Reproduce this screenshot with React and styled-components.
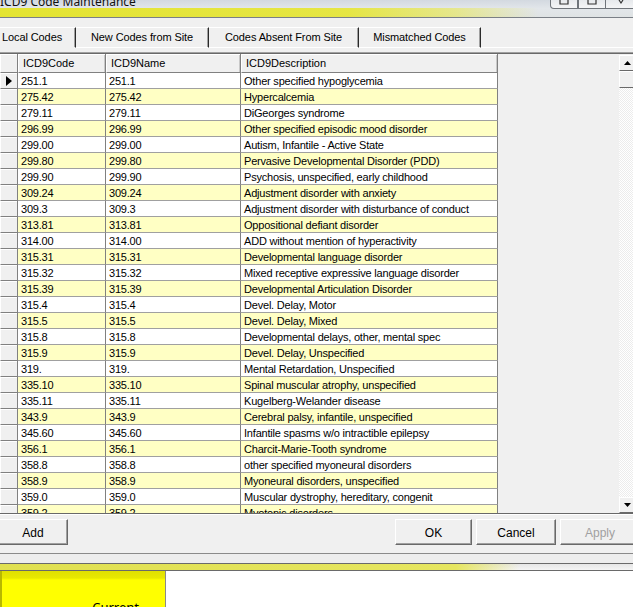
import styled, { createGlobalStyle } from "styled-components";

const GlobalStyle = createGlobalStyle`
  html, body {
    margin: 0;
    padding: 0;
    background: #ffffff;
    overflow: hidden;
  }
  body {
    font-family: "Liberation Sans", Arial, sans-serif;
  }
`;

const ROWS = [
  ["251.1", "251.1", "Other specified hypoglycemia"],
  ["275.42", "275.42", "Hypercalcemia"],
  ["279.11", "279.11", "DiGeorges syndrome"],
  ["296.99", "296.99", "Other specified episodic mood disorder"],
  ["299.00", "299.00", "Autism, Infantile - Active State"],
  ["299.80", "299.80", "Pervasive Developmental Disorder (PDD)"],
  ["299.90", "299.90", "Psychosis, unspecified, early childhood"],
  ["309.24", "309.24", "Adjustment disorder with anxiety"],
  ["309.3", "309.3", "Adjustment disorder with disturbance of conduct"],
  ["313.81", "313.81", "Oppositional defiant disorder"],
  ["314.00", "314.00", "ADD without mention of hyperactivity"],
  ["315.31", "315.31", "Developmental language disorder"],
  ["315.32", "315.32", "Mixed receptive expressive language disorder"],
  ["315.39", "315.39", "Developmental Articulation Disorder"],
  ["315.4", "315.4", "Devel. Delay, Motor"],
  ["315.5", "315.5", "Devel. Delay, Mixed"],
  ["315.8", "315.8", "Developmental delays, other, mental spec"],
  ["315.9", "315.9", "Devel. Delay, Unspecified"],
  ["319.", "319.", "Mental Retardation, Unspecified"],
  ["335.10", "335.10", "Spinal muscular atrophy, unspecified"],
  ["335.11", "335.11", "Kugelberg-Welander disease"],
  ["343.9", "343.9", "Cerebral palsy, infantile, unspecified"],
  ["345.60", "345.60", "Infantile spasms w/o intractible epilepsy"],
  ["356.1", "356.1", "Charcit-Marie-Tooth syndrome"],
  ["358.8", "358.8", "other specified myoneural disorders"],
  ["358.9", "358.9", "Myoneural disorders, unspecified"],
  ["359.0", "359.0", "Muscular dystrophy, hereditary, congenit"],
  ["359.2", "359.2", "Myotonic disorders"],
];

const COLS = [
  { key: "ICD9Code", w: 88 },
  { key: "ICD9Name", w: 135 },
  { key: "ICD9Description", w: 257 },
];

const TABS = [
  { label: "Local Codes", w: 76, active: true },
  { label: "New Codes from Site", w: 133 },
  { label: "Codes Absent From Site", w: 150 },
  { label: "Mismatched Codes", w: 122 },
];

export default function App() {
  return (
    <>
      <GlobalStyle />
      <Window>
        <TitleBar>
          <Title>ICD9 Code Maintenance</Title>
          <Caption>
            <CaptionButton>
              <svg width="12" height="7" viewBox="0 0 12 7">
                <path d="M2 0V4H10V0" fill="none" stroke="#333" strokeWidth="1.2" />
              </svg>
            </CaptionButton>
            <CaptionButton>
              <svg width="12" height="7" viewBox="0 0 12 7">
                <path d="M2 0V4H10V0" fill="none" stroke="#333" strokeWidth="1.2" />
              </svg>
            </CaptionButton>
            <CaptionButton last>
              <svg width="12" height="7" viewBox="0 0 12 7">
                <path d="M4 0L6 3L8 0" fill="none" stroke="#333" strokeWidth="1.2" />
              </svg>
            </CaptionButton>
          </Caption>
        </TitleBar>

        <TabArea>
          <TabRow>
            {TABS.map((t) => (
              <Tab key={t.label} $w={t.w} $active={t.active}>
                {t.label}
              </Tab>
            ))}
            <TabFill />
          </TabRow>
        </TabArea>

        <GridFrame>
          <Table>
            <HeaderRow>
              <Indicator header />
              {COLS.map((c) => (
                <HeaderCell key={c.key} $w={c.w}>
                  {c.key}
                </HeaderCell>
              ))}
            </HeaderRow>
            <Body>
              {ROWS.map((r, i) => (
                <Row key={r[0] + i} $alt={i % 2 === 1}>
                  <Indicator>
                    {i === 0 && (
                      <svg width="6" height="10" viewBox="0 0 6 10">
                        <path d="M0 0L6 5L0 10Z" fill="#000" />
                      </svg>
                    )}
                  </Indicator>
                  {r.map((v, j) => (
                    <Cell key={j} $w={COLS[j].w}>
                      {v}
                    </Cell>
                  ))}
                </Row>
              ))}
            </Body>
          </Table>
          <Empty />
          <ScrollBar>
            <ArrowButton>
              <svg width="7" height="4" viewBox="0 0 7 4">
                <path d="M0 4L3.5 0L7 4Z" fill="#000" />
              </svg>
            </ArrowButton>
            <Thumb />
            <Track />
            <ArrowButton>
              <svg width="7" height="4" viewBox="0 0 7 4">
                <path d="M0 0L3.5 4L7 0Z" fill="#000" />
              </svg>
            </ArrowButton>
          </ScrollBar>
        </GridFrame>

        <ButtonBar>
          <Button $w={70}>Add</Button>
          <Spacer />
          <Button $w={77}>OK</Button>
          <Button $w={80}>Cancel</Button>
          <Button $w={80} disabled>
            Apply
          </Button>
        </ButtonBar>

        <Divider />
        <Strip />
        <NextWindow>
          <YellowPanel>
            <PanelText>Current</PanelText>
          </YellowPanel>
          <WhitePanel />
        </NextWindow>
      </Window>
    </>
  );
}

const Window = styled.div`
  width: 633px;
  height: 607px;
  overflow: hidden;
  display: flex;
  flex-direction: column;
  background: #f0f0f0;
  font-family: "Liberation Sans", Arial, sans-serif;
  font-size: 11px;
  color: #000;
`;

const TitleBar = styled.div`
  height: 17px;
  flex: none;
  display: flex;
  align-items: flex-start;
  justify-content: space-between;
  border-bottom: 1px solid #7a7f86;
  background:
    linear-gradient(
        to right,
        rgba(228, 228, 40, 0.95) 0%,
        rgba(230, 230, 50, 0.9) 55%,
        rgba(232, 232, 80, 0.6) 72%,
        rgba(232, 232, 80, 0) 85%
      )
      0 8px / 100% 9px no-repeat,
    linear-gradient(to bottom, #d3d9e0 0%, #e2e6ea 50%, #dfe3e4 100%);
`;

const Title = styled.div`
  font-family: "Noto Sans", "Open Sans", sans-serif;
  font-size: 12px;
  line-height: 12px;
  margin-top: -4px;
  white-space: nowrap;
  color: #111;
`;

const Caption = styled.div`
  display: flex;
  margin-right: -4px;
`;

const CaptionButton = styled.div`
  width: ${(p) => (p.last ? 30 : 26)}px;
  height: 7px;
  display: flex;
  align-items: flex-end;
  justify-content: center;
  padding-bottom: 1px;
  border: 1px solid #6f747a;
  border-top: none;
  border-left: ${(p) => (p.last ? "none" : "1px solid #6f747a")};
  background: linear-gradient(to bottom, #e6e9ec, #f4f5f6);
  &:first-child {
    border-bottom-left-radius: 4px;
  }
`;

const TabArea = styled.div`
  height: 34px;
  flex: none;
  padding-top: 9px;
  box-sizing: border-box;
`;

const TabRow = styled.div`
  display: flex;
  height: 21px;
`;

const Tab = styled.div`
  width: ${(p) => p.$w}px;
  flex: none;
  box-sizing: border-box;
  height: 21px;
  display: flex;
  align-items: center;
  justify-content: ${(p) => (p.$active ? "flex-start" : "center")};
  padding-left: ${(p) => (p.$active ? "2px" : "0")};
  padding-bottom: 2px;
  border-top: 1px solid #ffffff;
  border-right: 1px solid #2a2a2a;
  box-shadow: inset -1px 0 0 #a0a0a0;
  border-bottom: ${(p) => (p.$active ? "1px solid #f0f0f0" : "1px solid #ffffff")};
  white-space: nowrap;
  letter-spacing: -0.1px;
`;

const TabFill = styled.div`
  flex: 1;
  border-bottom: 1px solid #ffffff;
`;

const GridFrame = styled.div`
  height: 463px;
  flex: none;
  display: flex;
  box-sizing: border-box;
  border-top: 1px solid #a0a0a0;
  border-bottom: 1px solid #ffffff;
  box-shadow: inset 0 1px 0 #696969, inset 0 -1px 0 #696969;
  padding: 1px 0 1px 0;
  overflow: hidden;
`;

const Table = styled.div`
  width: 498px;
  flex: none;
  display: flex;
  flex-direction: column;
  overflow: hidden;
`;

const HeaderRow = styled.div`
  display: flex;
  height: 19px;
  flex: none;
`;

const Indicator = styled.div`
  width: 18px;
  flex: none;
  box-sizing: border-box;
  display: flex;
  align-items: center;
  justify-content: flex-start;
  padding-left: 5px;
  background: #f0f0f0;
  border-left: 1px solid #ffffff;
  border-right: 1px solid #808080;
  border-bottom: 1px solid #808080;
  box-shadow: inset 0 1px 0 #ffffff;
`;

const HeaderCell = styled.div`
  width: ${(p) => p.$w}px;
  flex: none;
  box-sizing: border-box;
  display: flex;
  align-items: center;
  padding-left: 4px;
  background: #f0f0f0;
  border-left: 1px solid #ffffff;
  border-right: 1px solid #808080;
  border-bottom: 1px solid #808080;
  box-shadow: inset 0 1px 0 #ffffff, inset -1px 0 0 #c8c8c8;
  white-space: nowrap;
`;

const Body = styled.div`
  flex: 1;
  overflow: hidden;
`;

const Row = styled.div`
  display: flex;
  height: 16px;
  background: ${(p) => (p.$alt ? "#ffffc4" : "#ffffff")};
`;

const Cell = styled.div`
  width: ${(p) => p.$w}px;
  flex: none;
  box-sizing: border-box;
  display: flex;
  align-items: center;
  padding-left: 3px;
  padding-top: 1px;
  border-right: 1px solid #808080;
  border-bottom: 1px solid #a0a0a0;
  white-space: nowrap;
  overflow: hidden;
  letter-spacing: -0.2px;
`;

const Empty = styled.div`
  flex: 1;
  background: #f0f0f0;
`;

const ScrollBar = styled.div`
  width: 17px;
  flex: none;
  display: flex;
  flex-direction: column;
  margin-top: 1px;
  margin-right: -3px;
`;

const ArrowButton = styled.div`
  height: 16px;
  flex: none;
  box-sizing: border-box;
  display: flex;
  align-items: center;
  justify-content: center;
  background: #f0f0f0;
  border-top: 1px solid #ffffff;
  border-left: 1px solid #ffffff;
  border-bottom: 1px solid #696969;
  border-right: 1px solid #696969;
`;

const Thumb = styled(ArrowButton)`
  height: 17px;
`;

const Track = styled.div`
  flex: 1;
  background-color: #ffffff;
  background-image: repeating-conic-gradient(#ececec 0 25%, #ffffff 0 50%);
  background-size: 2px 2px;
`;

const ButtonBar = styled.div`
  height: 38px;
  flex: none;
  box-sizing: border-box;
  display: flex;
  align-items: flex-start;
  gap: 4px;
  padding: 4px 0 0 0;
  margin-left: -2px;
  margin-right: -7px;
`;

const Spacer = styled.div`
  flex: 1;
`;

const Button = styled.div`
  width: ${(p) => p.$w}px;
  height: 26px;
  flex: none;
  box-sizing: border-box;
  display: flex;
  align-items: center;
  justify-content: center;
  padding-top: 1px;
  font-size: 12px;
  background: #f0f0f0;
  border-top: 1px solid #ffffff;
  border-left: 1px solid #ffffff;
  border-right: 1px solid #696969;
  border-bottom: 1px solid #696969;
  box-shadow: inset -1px -1px 0 #a0a0a0;
  color: ${(p) => (p.disabled ? "#a0a0a0" : "#000")};
`;

const Divider = styled.div`
  height: 9px;
  flex: none;
  border-top: 1px solid #8a8a8a;
  border-bottom: 1px solid #6a6a6a;
  background: #ededed;
`;

const Strip = styled.div`
  height: 6px;
  flex: none;
  border-bottom: 1px solid #6a6a6a;
  background:
    linear-gradient(to right, #e0e050 0%, #e6e660 72%, rgba(230, 230, 120, 0) 82%),
    linear-gradient(to bottom, #e6e6e6, #f4f4f4);
`;

const NextWindow = styled.div`
  flex: 1;
  display: flex;
  background: #ffffff;
`;

const YellowPanel = styled.div`
  width: 166px;
  flex: none;
  box-sizing: border-box;
  border-left: 2px solid #b8b800;
  border-right: 1px solid #8a8a8a;
  background: linear-gradient(to bottom, #e0e000 0px, #e8e800 7px, #ffff00 9px);
  display: flex;
  justify-content: flex-end;
  align-items: flex-end;
  padding-right: 26px;
`;

const PanelText = styled.div`
  font-family: "Noto Sans", sans-serif;
  font-size: 13px;
  line-height: 13px;
  margin-bottom: -7px;
`;

const WhitePanel = styled.div`
  flex: 1;
`;
